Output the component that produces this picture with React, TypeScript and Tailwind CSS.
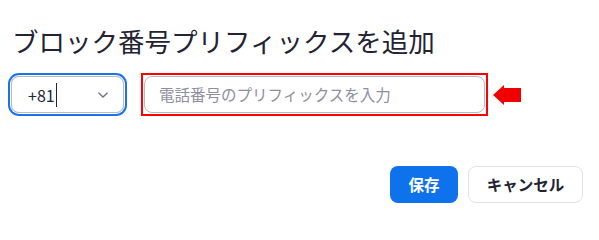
import React from "react";

export default function App() {
  const font = { fontFamily: '"Noto Sans CJK JP", "Noto Sans", sans-serif' };
  return (
    <div className="w-[599px] h-[216px] bg-white overflow-hidden" style={font}>
      <div className="pt-[25px] pl-[12px] text-[26.5px] leading-[32px] text-[#232333]">
        ブロック番号プリフィックスを追加
      </div>
      <div className="mt-[16px] pl-[11px] flex items-center">
        <div className="w-[113px] h-[37px] rounded-lg border border-[#b6bcc4] ring-2 ring-[#1a73e8] ring-offset-1 flex items-center pl-[16px] pr-[14px]">
          <span className="text-[16px] text-[#232333] leading-none">+81</span>
          <span className="w-px h-[24px] bg-[#232333] ml-[1px]" />
          <svg className="ml-auto" width="12" height="8" viewBox="0 0 12 8">
            <path d="M1.5 1.8 L6 6 L10.5 1.8" fill="none" stroke="#747487" strokeWidth="1.4" />
          </svg>
        </div>
        <div className="ml-[17px] border-2 border-[#ff0000] p-[1px]">
          <div className="w-[341px] h-[37px] rounded-lg border border-[#b6bcc4] flex items-center pl-[14px] text-[15.5px] text-[#8f8f9e]">
            電話番号のプリフィックスを入力
          </div>
        </div>
        <svg className="ml-[5px]" width="28" height="20" viewBox="0 0 28 20">
          <polygon points="0,10 11,0 11,3 28,3 28,17 11,17 11,20" fill="#f00000" />
        </svg>
      </div>
      <div className="mt-[50px] pr-[16px] flex justify-end gap-[10px]">
        <button className="w-[68px] h-[37px] rounded-lg bg-[#0e72ed] text-white text-[15.5px] font-bold">
          保存
        </button>
        <button className="w-[115px] h-[37px] rounded-lg border border-[#dfe3e8] bg-white text-[#232333] text-[15.5px] font-bold">
          キャンセル
        </button>
      </div>
    </div>
  );
}
